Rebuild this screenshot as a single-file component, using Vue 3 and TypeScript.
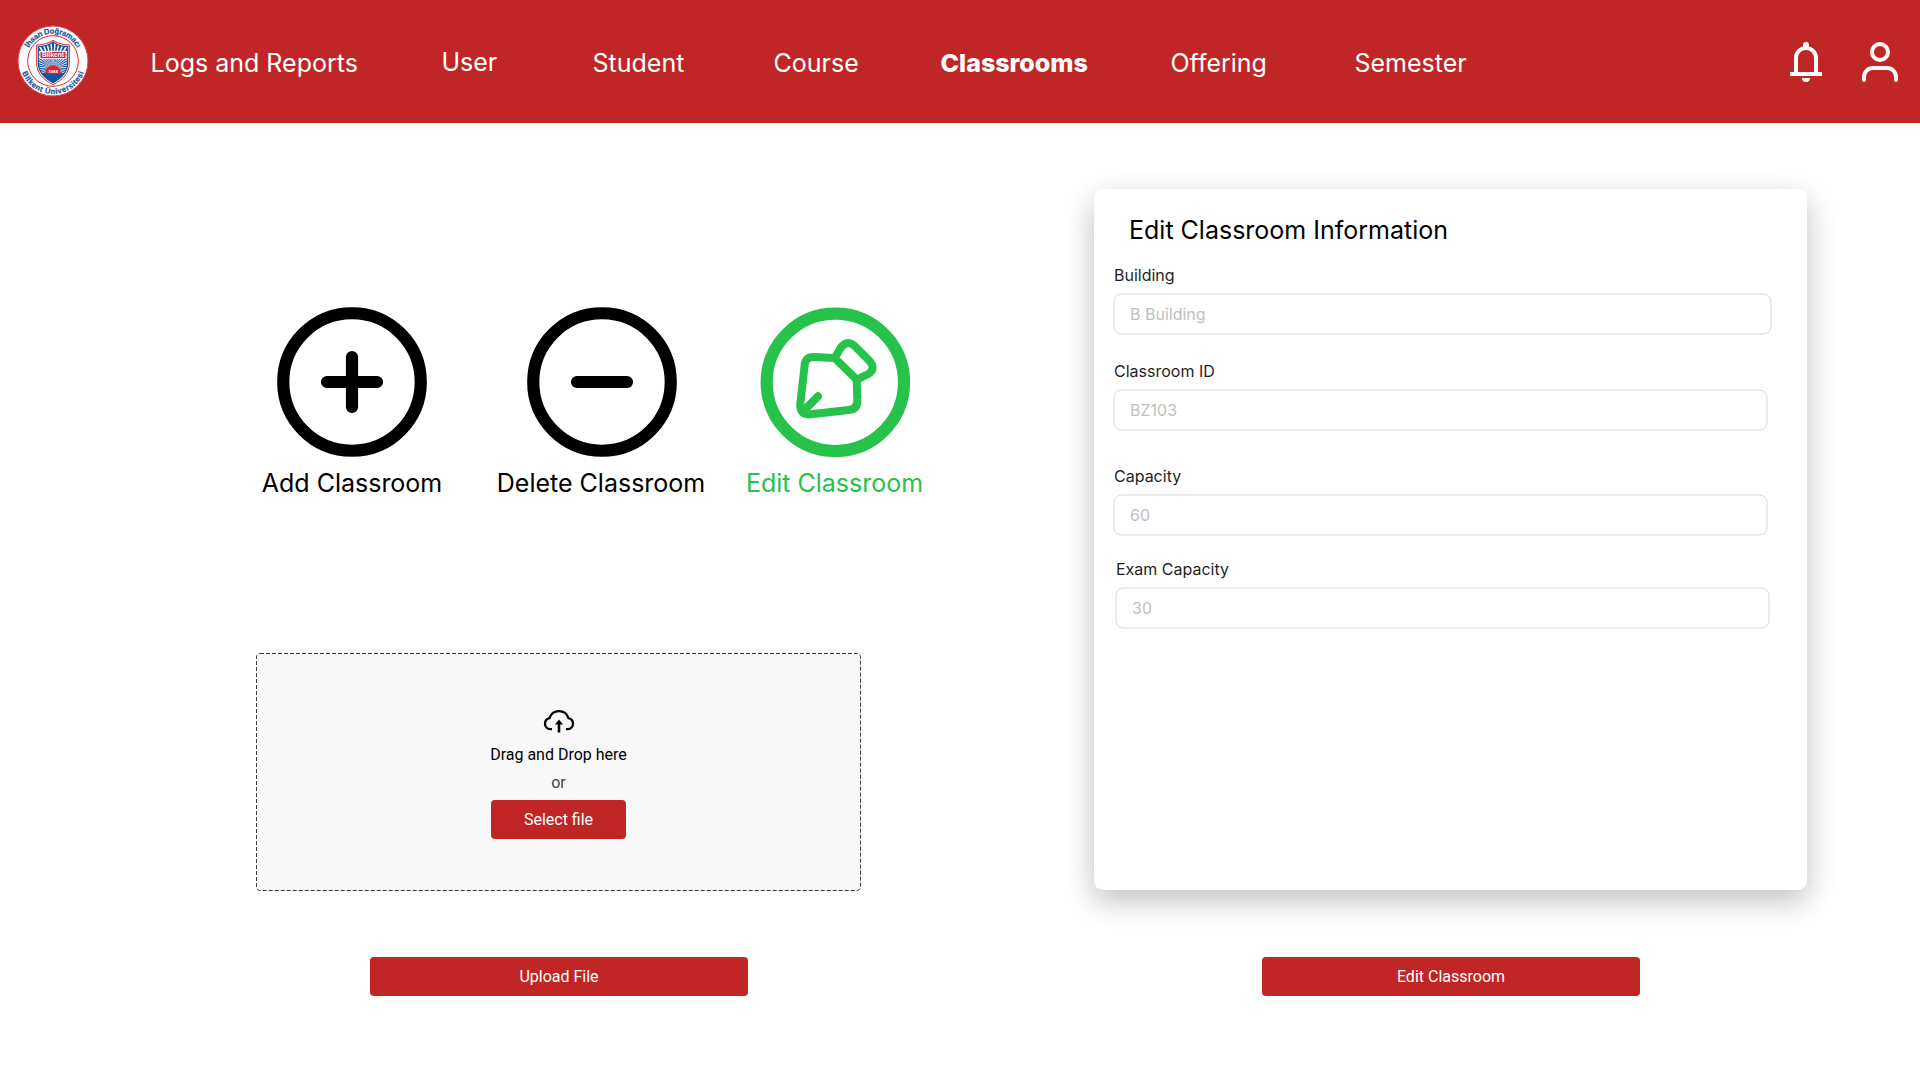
<script setup lang="ts">
interface NavItem { label: string; active?: boolean; raised?: boolean }
interface Field { label: string; placeholder: string; kind: string }

const navItems: NavItem[] = [
  { label: 'Logs and Reports' },
  { label: 'User', raised: true },
  { label: 'Student' },
  { label: 'Course' },
  { label: 'Classrooms', active: true },
  { label: 'Offering' },
  { label: 'Semester' },
]

const fields: Field[] = [
  { label: 'Building', placeholder: 'B Building', kind: 'building' },
  { label: 'Classroom ID', placeholder: 'BZ103', kind: 'classroom-id' },
  { label: 'Capacity', placeholder: '60', kind: 'capacity' },
  { label: 'Exam Capacity', placeholder: '30', kind: 'exam' },
]

const rays: number[] = Array.from({ length: 40 }, (_, i) => i * 9)
</script>

<template>
  <div class="page">
    <header class="header">
      <svg class="logo" viewBox="-108 -108 216 216">
        <defs>
          <path id="arc-top" d="M-82 0A82 82 0 0 1 82 0" />
          <path id="arc-bottom" d="M-99 0A99 99 0 0 0 99 0" />
          <clipPath id="shield-clip"><path d="M0-57C-14-47-30-43-44-43V6C-44 34-26 51 0 65C26 51 44 34 44 6V-43C30-43 14-47 0-57Z" /></clipPath>
        </defs>
        <circle r="105" fill="#fff" stroke="#e2474b" stroke-width="3" />
        <circle r="76" fill="#fff" stroke="#d9292e" stroke-width="3" />
        <path d="M0-62C-16-52-32-48-49-48V6C-49 37-29 56 0 71C29 56 49 37 49 6V-48C32-48 16-52 0-62Z" fill="#fff" stroke="#d9292e" stroke-width="3" />
        <g clip-path="url(#shield-clip)">
          <rect x="-50" y="-60" width="100" height="130" fill="#fff" />
          <path v-for="a in rays" :key="a" d="M0 0L-4-90H4Z" fill="#17539c" :transform="`translate(0 22) rotate(${a})`" />
          <rect x="-50" y="36" width="100" height="40" fill="#17539c" />
          <path d="M-24 38A24 25 0 0 1 24 38Z" fill="#dc2429" />
        </g>
        <path d="M0-57C-14-47-30-43-44-43V6C-44 34-26 51 0 65C26 51 44 34 44 6V-43C30-43 14-47 0-57Z" fill="none" stroke="#17539c" stroke-width="3.500" />
        <rect x="-39" y="-29" width="78" height="22" fill="#dc2429" stroke="#fff" stroke-width="3" />
        <text class="crest" x="0" y="-11" text-anchor="middle" font-size="19" fill="#fff" textLength="66" lengthAdjust="spacingAndGlyphs">Bilkent</text>
        <text class="crest" x="0" y="35" text-anchor="middle" font-size="13" fill="#fff">1984</text>
        <text class="crest ring" font-size="23"><textPath href="#arc-top" startOffset="50%" text-anchor="middle" textLength="176">İhsan Doğramacı</textPath></text>
        <text class="crest ring" font-size="23"><textPath href="#arc-bottom" startOffset="50%" text-anchor="middle" textLength="240">Bilkent Üniversitesi</textPath></text>
      </svg>
      <nav class="nav">
        <a v-for="item in navItems" :key="item.label" class="nav-item" :class="{ active: item.active, raised: item.raised }">{{ item.label }}</a>
      </nav>
      <div class="header-icons">
        <svg class="bell" width="32" height="42" viewBox="0 0 32 42">
          <path d="M6 32V18a10 10 0 0 1 20 0V32" fill="none" stroke="#fff" stroke-width="4" />
          <path d="M0 32H32V36H0Z M13 5a3 3 0 0 1 6 0V8H13Z M12 38H20A4 4 0 0 1 12 38Z" fill="#fff" />
        </svg>
        <svg class="user" width="36" height="42" viewBox="0 0 36 42" fill="none" stroke="#f5f5f5" stroke-width="4" stroke-linecap="round">
          <circle cx="18" cy="12" r="8" />
          <path d="M2 40V37A9 9 0 0 1 11 28H25A9 9 0 0 1 34 37V40" />
        </svg>
      </div>
    </header>

    <main class="content">
      <section class="left">
        <div class="actions">
          <div class="action add">
            <svg viewBox="0 0 24 24"><circle cx="12" cy="12" r="11" /><path d="M12 8V16M8 12H16" /></svg>
            <span>Add Classroom</span>
          </div>
          <div class="action delete">
            <svg viewBox="0 0 24 24"><circle cx="12" cy="12" r="11" /><path d="M8 12H16" /></svg>
            <span>Delete Classroom</span>
          </div>
          <div class="action edit">
            <svg viewBox="0 0 450 450">
              <circle cx="226" cy="226" r="206" stroke-width="36.500" />
              <path class="pen" d="M224 153L163 150Q137 149 134 174L121 290Q118 325 152 322L266 309Q294 306 292 278L290 218ZM224 153L240 126Q259 96 284 117L327 160Q350 184 325 201L290 218M135 307L174 268" />
            </svg>
            <span>Edit Classroom</span>
          </div>
        </div>

        <div class="dropzone">
          <svg class="outline" width="605" height="238"><rect x=".5" y=".5" width="604" height="237" rx="3.500" fill="none" stroke="#3c3c3c" stroke-dasharray="4 2" /></svg>
          <svg class="cloud" width="32" height="26" viewBox="0 0 32 26">
            <path d="M9 20.200H7.200C4.200 19.900 2 17.600 2 14.700C2 12 3.900 9.800 6.500 9.200C7.800 5 11.500 2.200 16 2.200C20.500 2.200 24.200 5 25.500 9.200C28.100 9.800 30 12 30 14.700C30 17.600 27.800 19.900 24.800 20.200H23" fill="none" stroke="#000" stroke-width="2.300" />
            <path d="M16 23.500V14" stroke="#000" stroke-width="2.600" />
            <path d="M16 10.500L20 15.500H12Z" />
          </svg>
          <span class="drop-text">Drag and Drop here</span>
          <span class="or">or</span>
          <button class="button select">Select file</button>
        </div>
        <button class="button wide">Upload File</button>
      </section>

      <section class="right">
        <form class="card">
          <h1>Edit Classroom Information</h1>
          <div v-for="f in fields" :key="f.kind" class="field" :class="f.kind">
            <label>{{ f.label }}</label>
            <div class="input">{{ f.placeholder }}</div>
          </div>
        </form>
        <button class="button wide">Edit Classroom</button>
      </section>
    </main>
  </div>
</template>

<style>
body { margin: 0; background: #fff; }
</style>

<style scoped>
.page { width: 1920px; height: 1080px; overflow: hidden; background: #fff; font-family: Inter, "Liberation Sans", sans-serif; color: #000; box-sizing: border-box; }
.page * { box-sizing: border-box; }
.header { display: flex; height: 123px; background: #c02626; }
.logo { width: 72px; height: 72px; margin: 25px 0 0 17px; flex: none; }
.crest { font-family: "Liberation Sans", sans-serif; font-weight: 700; }
.crest.ring { fill: #17539c; stroke: #17539c; stroke-width: .6; }
.nav { display: grid; grid-template-columns: 291px 151px 181px 167px 230px 184px 160px; align-items: start; margin-left: 61.5px; padding-top: 48px; }
.nav-item { color: #fff; font-size: 25px; line-height: 30px; font-weight: 400; white-space: nowrap; }
.nav-item.active { font-weight: 800; }
.nav-item.raised { margin-top: -1px; }
.header-icons { display: flex; gap: 40px; margin: 40px 22px 0 auto; }
.content { display: flex; }
.left { width: 1094px; padding-top: 184px; }
.actions { display: flex; margin-left: 252px; height: 346px; }
.action { display: flex; flex-direction: column; align-items: center; width: 200px; font-size: 25px; line-height: 30px; white-space: nowrap; }
.action svg { width: 150px; height: 150px; fill: none; stroke: currentColor; stroke-width: 1.95; stroke-linecap: round; stroke-linejoin: round; margin-bottom: 11px; flex: none; }
.action.delete { margin-left: 50px; }
.action.delete span { margin-right: 2px; }
.action.edit { margin-left: 33px; color: #27c24c; }
.action.edit span { margin-right: 1px; }
.action svg .pen { stroke-width: 24; }
.dropzone { position: relative; display: flex; flex-direction: column; align-items: center; width: 605px; height: 238px; margin-left: 256px; padding-top: 56px; background: #f8f8f8; border-radius: 4px; font-family: Roboto, sans-serif; font-size: 16px; line-height: 20px; }
.outline { position: absolute; inset: 0; }
.cloud { display: block; }
.drop-text { margin-top: 10px; }
.or { margin-top: 8px; color: #444; }
.button { display: flex; align-items: center; justify-content: center; height: 39px; padding: 0; border: 0; border-radius: 4px; background: #c02626; color: #fff; font: 400 16px/20px Roboto, sans-serif; }
.select { width: 135px; margin-top: 7px; }
.wide { width: 378px; }
.left > .wide { margin: 66px 0 0 370px; }
.right { padding-top: 66px; }
.right > .wide { margin: 67px 0 0 168px; }
.card { width: 713px; height: 701px; padding: 26px 0 0 19px; border-radius: 9px; background: #fff; box-shadow: 0 11px 30px rgba(0, 0, 0, .25); }
h1 { margin: 0 0 20px 16px; font-size: 25px; line-height: 30px; font-weight: 400; }
.field { width: 655px; font-size: 16px; }
label { display: block; padding-left: 1px; line-height: 20px; color: #1f1f1f; }
.input { position: relative; height: 42px; margin-top: 8px; padding: 11px 0 0 17px; line-height: 20px; color: #bfbfbf; }
.input::before { content: ""; position: absolute; inset: 0 1px 1px 0; border: 1px solid #d9d9d9; border-radius: 8px; transform: translate(.5px, .5px); }
.building { width: 659px; }
.classroom-id { margin-top: 26px; }
.capacity { margin-top: 35px; }
.exam { margin: 23px 0 0 2px; }
</style>
